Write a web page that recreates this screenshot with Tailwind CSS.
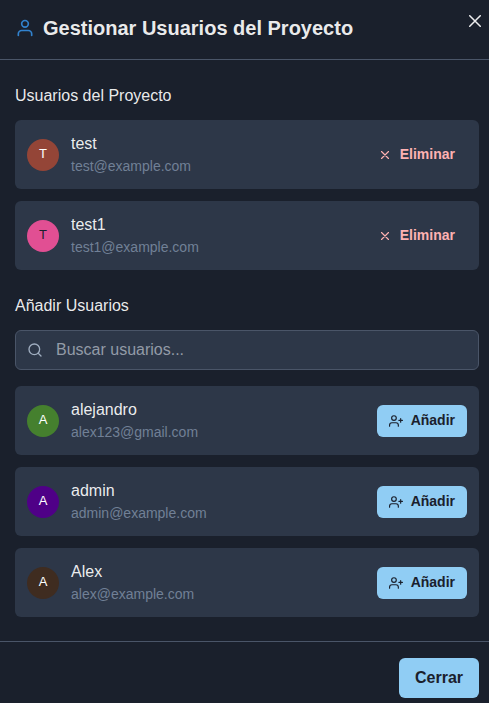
<!DOCTYPE html>
<html lang="es">
<head>
<meta charset="utf-8">
<meta name="viewport" content="width=device-width, initial-scale=1">
<title>Gestionar Usuarios del Proyecto</title>
<script src="https://cdn.jsdelivr.net/npm/@tailwindcss/browser@4"></script>
</head>
<body class="min-h-screen bg-[#1a202c] font-['Liberation_Sans',Arial,sans-serif] text-base text-white/92">
<svg class="hidden" aria-hidden="true">
  <symbol id="x" viewBox="0 0 24 24"><path d="M18 6 6 18M6 6l12 12"/></symbol>
  <symbol id="user-plus" viewBox="0 0 24 24"><path d="M16 21v-2a4 4 0 0 0-4-4H5a4 4 0 0 0-4 4v2"/><circle cx="8.5" cy="7" r="4"/><path d="M20 8v6M23 11h-6"/></symbol>
</svg>
<div role="dialog" aria-labelledby="title" class="relative">
  <header class="flex items-center gap-2 border-b border-[#4a5568] pt-3.5 pr-10 pb-[17px] pl-[15px]">
    <svg class="size-5 shrink-0 fill-none stroke-[#3182ce] stroke-2" viewBox="0 0 24 24" stroke-linecap="round" stroke-linejoin="round"><path d="M20 21v-2a4 4 0 0 0-4-4H8a4 4 0 0 0-4 4v2"/><circle cx="12" cy="7" r="4"/></svg>
    <h1 id="title" class="text-xl leading-7 font-bold">Gestionar Usuarios del Proyecto</h1>
  </header>
  <button type="button" aria-label="Cerrar ventana" class="absolute top-[9px] right-0.5 flex size-6 items-center justify-center">
    <svg class="size-3 fill-none stroke-current stroke-[1.5]" viewBox="0 0 12 12" stroke-linecap="round"><path d="M.75.75l10.5 10.5M11.25.75.75 11.25"/></svg>
  </button>

  <main class="flex flex-col gap-6 py-6 pr-2.5 pl-[15px]">
    <section class="flex flex-col gap-3">
      <h2 class="leading-6">Usuarios del Proyecto</h2>
      <ul class="flex flex-col gap-3">
        <li class="flex items-center gap-3 rounded-md bg-[#2d3748] p-3">
          <span class="flex size-8 shrink-0 items-center justify-center rounded-full bg-[#944537] pb-0.5 text-[13px] text-white">T</span>
          <div class="min-w-0 flex-1"><p class="leading-6">test</p><p class="text-sm leading-[21px] text-[#718096]">test@example.com</p></div>
          <button type="button" class="flex h-8 items-center gap-2 rounded-md px-3 text-sm font-bold text-[#feb2b2]"><svg class="size-3.5 fill-none stroke-current stroke-2" stroke-linecap="round" stroke-linejoin="round"><use href="#x"/></svg><span class="pb-0.5">Eliminar</span></button>
        </li>
        <li class="flex items-center gap-3 rounded-md bg-[#2d3748] p-3">
          <span class="flex size-8 shrink-0 items-center justify-center rounded-full bg-[#e14f93] pb-0.5 text-[13px] text-[#1a202c]">T</span>
          <div class="min-w-0 flex-1"><p class="leading-6">test1</p><p class="text-sm leading-[21px] text-[#718096]">test1@example.com</p></div>
          <button type="button" class="flex h-8 items-center gap-2 rounded-md px-3 text-sm font-bold text-[#feb2b2]"><svg class="size-3.5 fill-none stroke-current stroke-2" stroke-linecap="round" stroke-linejoin="round"><use href="#x"/></svg><span class="pb-0.5">Eliminar</span></button>
        </li>
      </ul>
    </section>

    <section>
      <h2 class="mb-3 leading-6"><label for="search">Añadir Usuarios</label></h2>
      <div class="mb-4 flex h-10 items-center gap-[13px] rounded-md border border-[#4a5568] bg-[#2d3748] px-[11px]">
        <svg class="size-4 shrink-0 fill-none stroke-[#a0aec0] stroke-2" viewBox="0 0 24 24" stroke-linecap="round" stroke-linejoin="round"><circle cx="11" cy="11" r="8"/><path d="m21 21-4.35-4.35"/></svg>
        <input id="search" type="text" placeholder="Buscar usuarios..." class="min-w-0 flex-1 bg-transparent leading-6 outline-none placeholder:text-[#939ba7]">
      </div>
      <ul class="flex flex-col gap-3">
        <li class="flex items-center gap-3 rounded-md bg-[#2d3748] p-3">
          <span class="flex size-8 shrink-0 items-center justify-center rounded-full bg-[#45802e] pb-0.5 text-[13px] text-white">A</span>
          <div class="min-w-0 flex-1"><p class="leading-6">alejandro</p><p class="text-sm leading-[21px] text-[#718096]">alex123@gmail.com</p></div>
          <button type="button" class="flex h-8 items-center gap-2 rounded-md bg-[#90cdf4] px-3 text-sm font-bold text-[#1a202c]"><svg class="size-3.5 fill-none stroke-current stroke-2" stroke-linecap="round" stroke-linejoin="round"><use href="#user-plus"/></svg><span class="pb-0.5">Añadir</span></button>
        </li>
        <li class="flex items-center gap-3 rounded-md bg-[#2d3748] p-3">
          <span class="flex size-8 shrink-0 items-center justify-center rounded-full bg-[#4f0087] pb-0.5 text-[13px] text-white">A</span>
          <div class="min-w-0 flex-1"><p class="leading-6">admin</p><p class="text-sm leading-[21px] text-[#718096]">admin@example.com</p></div>
          <button type="button" class="flex h-8 items-center gap-2 rounded-md bg-[#90cdf4] px-3 text-sm font-bold text-[#1a202c]"><svg class="size-3.5 fill-none stroke-current stroke-2" stroke-linecap="round" stroke-linejoin="round"><use href="#user-plus"/></svg><span class="pb-0.5">Añadir</span></button>
        </li>
        <li class="flex items-center gap-3 rounded-md bg-[#2d3748] p-3">
          <span class="flex size-8 shrink-0 items-center justify-center rounded-full bg-[#3f2c20] pb-0.5 text-[13px] text-white">A</span>
          <div class="min-w-0 flex-1"><p class="leading-6">Alex</p><p class="text-sm leading-[21px] text-[#718096]">alex@example.com</p></div>
          <button type="button" class="flex h-8 items-center gap-2 rounded-md bg-[#90cdf4] px-3 text-sm font-bold text-[#1a202c]"><svg class="size-3.5 fill-none stroke-current stroke-2" stroke-linecap="round" stroke-linejoin="round"><use href="#user-plus"/></svg><span class="pb-0.5">Añadir</span></button>
        </li>
      </ul>
    </section>
  </main>

  <footer class="flex justify-end border-t border-[#4a5568] pt-4 pr-2.5 pb-[5px] pl-[15px]">
    <button type="button" class="h-10 rounded-md bg-[#90cdf4] px-4 font-bold text-[#1a202c]">Cerrar</button>
  </footer>
</div>
</body>
</html>
